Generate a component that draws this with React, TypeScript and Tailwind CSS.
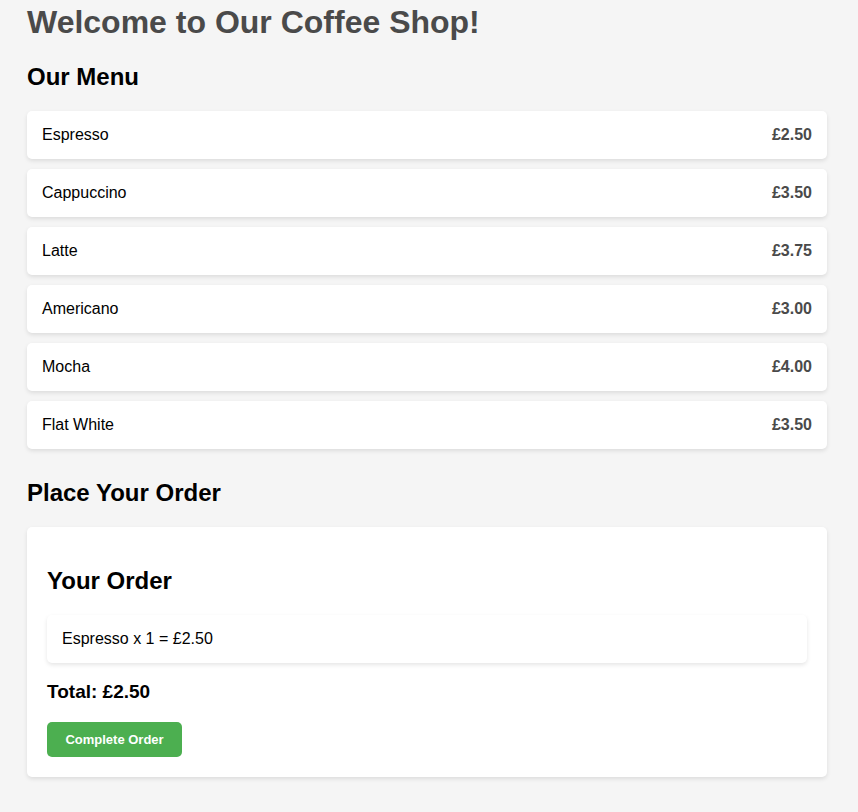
import React from "react";

interface MenuItem {
  name: string;
  price: number;
}

const menu: MenuItem[] = [
  { name: "Espresso", price: 2.5 },
  { name: "Cappuccino", price: 3.5 },
  { name: "Latte", price: 3.75 },
  { name: "Americano", price: 3 },
  { name: "Mocha", price: 4 },
  { name: "Flat White", price: 3.5 },
];

const order = [{ name: "Espresso", quantity: 1, price: 2.5 }];

const pounds = (value: number) => `£${value.toFixed(2)}`;

export default function App() {
  const total = order.reduce((sum, line) => sum + line.quantity * line.price, 0);

  return (
    <div className="min-h-screen bg-[#f5f5f5] font-['Liberation_Sans',Arial,sans-serif] text-base text-black">
      <main className="pt-1 pr-[31px] pb-[35px] pl-[27px]">
        <h1 className="text-[32px] leading-9 font-bold text-[#4a4a4a]">Welcome to Our Coffee Shop!</h1>

        <section className="mt-[23px]">
          <h2 className="text-2xl leading-7 font-bold">Our Menu</h2>
          <ul className="mt-5 flex flex-col gap-2.5">
            {menu.map((item) => (
              <li
                key={item.name}
                className="flex items-center justify-between rounded-[5px] bg-white p-[15px] leading-[18px] shadow-[0_2px_4px_rgba(0,0,0,0.1)]"
              >
                <span>{item.name}</span>
                <span className="font-bold text-[#4a4a4a]">{pounds(item.price)}</span>
              </li>
            ))}
          </ul>
        </section>

        <section className="mt-[30px]">
          <h2 className="text-2xl leading-7 font-bold">Place Your Order</h2>
          <div className="mt-5 rounded-[5px] bg-white p-5 pt-10 shadow-[0_2px_4px_rgba(0,0,0,0.1)]">
            <h2 className="text-2xl leading-7 font-bold">Your Order</h2>
            <ul className="mt-5">
              {order.map((line) => (
                <li
                  key={line.name}
                  className="rounded-[5px] bg-white p-[15px] leading-[18px] shadow-[0_2px_4px_rgba(0,0,0,0.1)]"
                >
                  {line.name} x {line.quantity} = {pounds(line.quantity * line.price)}
                </li>
              ))}
            </ul>
            <h3 className="mt-[18px] text-[19px] leading-[21px] font-bold">Total: {pounds(total)}</h3>
            <button
              type="button"
              className="mt-5 block w-[135px] cursor-pointer rounded-[5px] bg-[#4caf50] py-2.5 text-[13px] leading-[15px] font-bold text-white hover:bg-[#45a049]"
            >
              Complete Order
            </button>
          </div>
        </section>
      </main>
    </div>
  );
}
